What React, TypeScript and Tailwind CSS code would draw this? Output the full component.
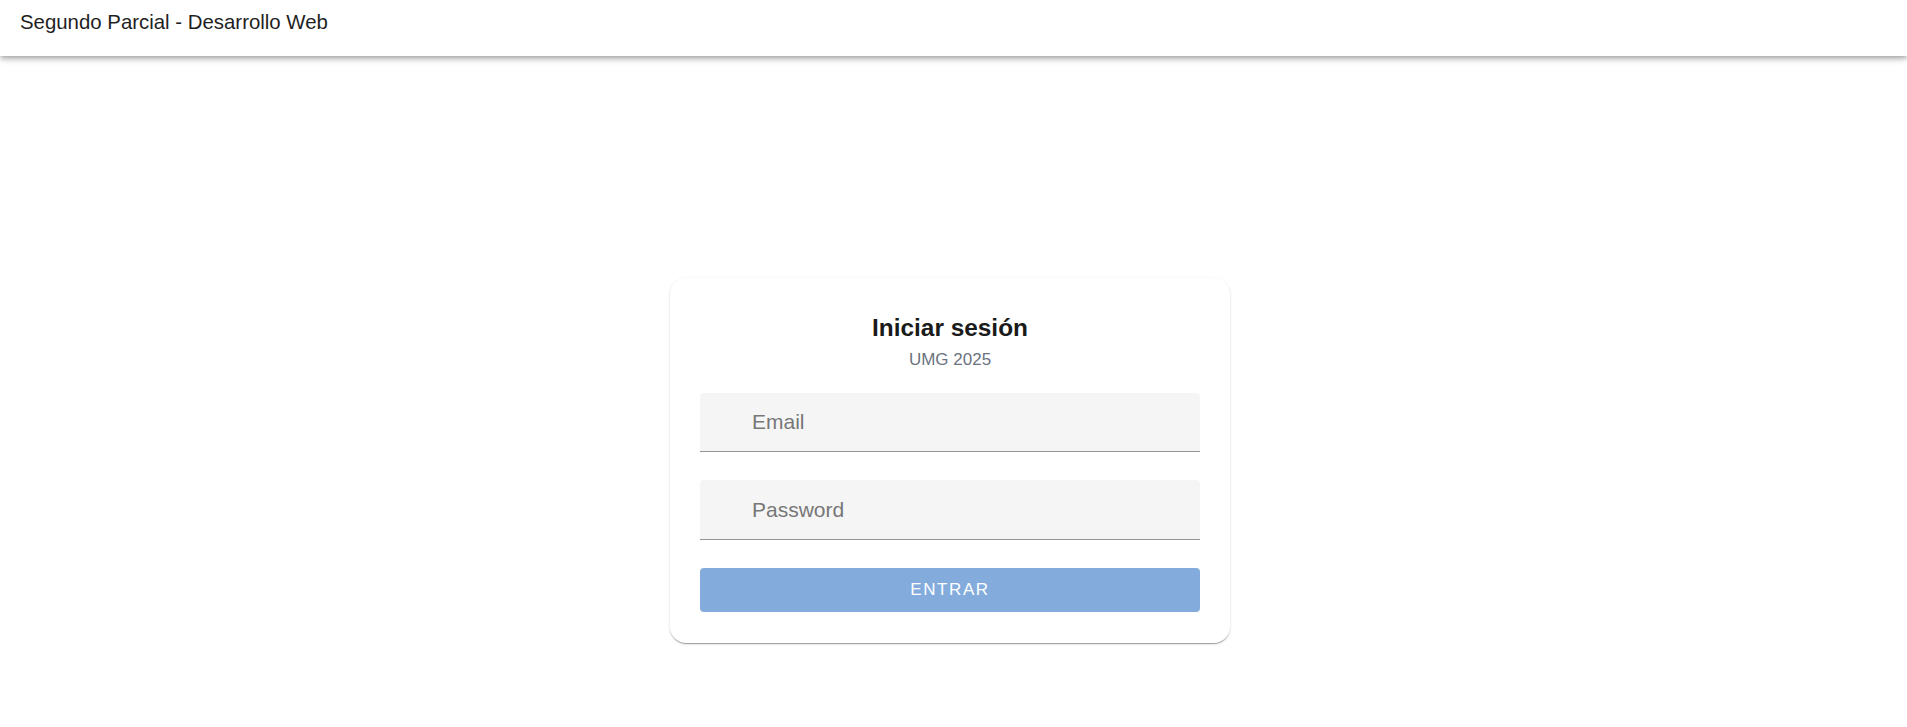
export default function App() {
  return (
    <div className="min-h-screen bg-white font-['Liberation_Sans',Arial,sans-serif]">
      {/* App bar */}
      <header className="relative z-10 h-[56px] bg-white px-5 pt-[6px] shadow-[0_2px_4px_-1px_rgba(0,0,0,0.2),0_4px_5px_0_rgba(0,0,0,0.14),0_1px_10px_0_rgba(0,0,0,0.12)]">
        <h1 className="text-[20.4px] leading-[32px] font-normal text-[#1f1f1f]">
          Segundo Parcial - Desarrollo Web
        </h1>
      </header>

      <main className="flex justify-center pt-[222px] pr-[7px]">
        <div className="w-[560px] rounded-[16px] bg-white px-[30px] pt-[34px] pb-[31px] shadow-[0_2px_1px_-1px_rgba(0,0,0,0.22),0_1px_1px_0_rgba(0,0,0,0.14),0_1px_3px_0_rgba(0,0,0,0.12)]">
          <h2 className="text-center text-[24.4px] leading-[32px] font-bold text-[#1a1a1a]">
            Iniciar sesión
          </h2>
          <p className="mt-1 text-center text-[17px] leading-[24px] text-[#6b7280]">
            UMG 2025
          </p>

          <form className="mt-[21px] flex flex-col gap-[28px]" onSubmit={(e) => e.preventDefault()}>
            <div className="flex h-[59px] items-center rounded-t-[4px] border-b border-[#949494] bg-[#f5f5f5] pl-[52px]">
              <input
                type="email"
                placeholder="Email"
                className="w-full bg-transparent text-[21px] text-[#1f1f1f] outline-none placeholder:text-[#777777]"
              />
            </div>
            <div className="flex h-[60px] items-center rounded-t-[4px] border-b border-[#949494] bg-[#f5f5f5] pl-[52px]">
              <input
                type="password"
                placeholder="Password"
                className="w-full bg-transparent text-[21px] text-[#1f1f1f] outline-none placeholder:text-[#777777]"
              />
            </div>
            <button
              type="submit"
              className="h-[44px] w-full rounded-[4px] bg-[#83acdd] text-[17px] tracking-[1.6px] text-white"
            >
              ENTRAR
            </button>
          </form>
        </div>
      </main>
    </div>
  );
}
